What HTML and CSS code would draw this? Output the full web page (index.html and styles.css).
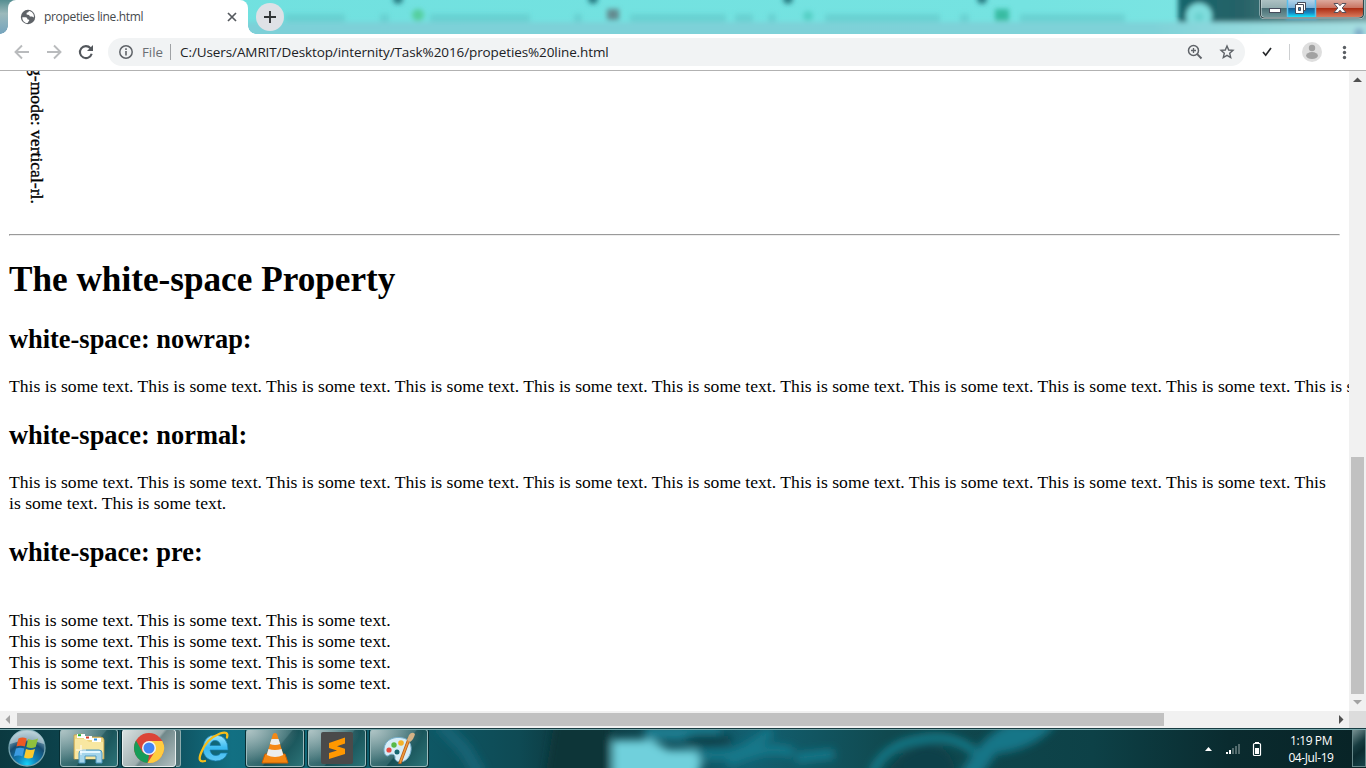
FILE: index.html
```
<!DOCTYPE html>
<html lang="en">
<head>
<meta charset="utf-8">
<title>propeties line.html</title>
<link rel="stylesheet" href="styles.css">
</head>
<body>
<div class="screen">
  <header class="titlebar">
    <svg class="backdrop" width="1366" height="34" viewBox="0 0 1366 34">
      <defs>
        <linearGradient id="aero" x1="0" x2="1"><stop offset="0" stop-color="#6f9fae"/><stop offset=".05" stop-color="#70e0df"/><stop offset=".75" stop-color="#75e3e1"/><stop offset="1" stop-color="#80e5e4"/></linearGradient>
        <linearGradient id="corner" x1="0" x2="1"><stop offset="0" stop-color="#15656c"/><stop offset=".3" stop-color="#266267"/><stop offset=".6" stop-color="#557f83"/><stop offset="1" stop-color="#7ba8ab"/></linearGradient>
        <linearGradient id="edge" x1="0" x2="1"><stop offset="0" stop-color="#7dd0d8"/><stop offset=".8" stop-color="#7ed2d8"/><stop offset=".92" stop-color="#9bdcdf"/><stop offset="1" stop-color="#a9e0e2"/></linearGradient>
        <linearGradient id="leftedge" x1="0" y1="0" x2="0" y2="1"><stop offset="0" stop-color="#558e91"/><stop offset=".4" stop-color="#9bb9bb"/><stop offset="1" stop-color="#75a4bd"/></linearGradient>
        <filter id="soft" filterUnits="userSpaceOnUse" x="-20" y="-20" width="1420" height="80"><feGaussianBlur stdDeviation="2.4"/></filter>
      </defs>
      <rect width="1366" height="34" fill="url(#aero)"/>
      <rect width="20" height="34" fill="url(#leftedge)"/>
      <g filter="url(#soft)">
        <rect x="1178" y="-16" width="210" height="40" fill="url(#corner)"/>
        <circle cx="1199" cy="16" r="13" fill="#7fdddd"/>
        <rect x="240" y="22" width="1140" height="28" fill="url(#edge)"/>
        <g fill="#58b5b8" opacity=".38"><rect x="285" y="14" width="60" height="8"/><rect x="380" y="14" width="9" height="8"/><rect x="430" y="14" width="100" height="8"/><rect x="574" y="14" width="8" height="8"/><rect x="630" y="14" width="96" height="8"/><rect x="735" y="14" width="18" height="8"/><rect x="768" y="14" width="8" height="8"/><rect x="825" y="14" width="115" height="8"/><rect x="960" y="14" width="9" height="8"/><rect x="1020" y="14" width="105" height="8"/></g>
        <g fill="#257980"><circle cx="398" cy="-1" r="5"/><circle cx="593" cy="-1" r="5"/><circle cx="788" cy="-1" r="5"/><circle cx="982" cy="-1" r="5"/></g>
        <circle cx="418" cy="15" r="6" fill="#55cf9e"/><rect x="607" y="9" width="12" height="11" fill="#648b90"/><circle cx="808" cy="16" r="5" fill="#54cfc5"/><rect x="995" y="9" width="14" height="12" fill="#38bba2"/><circle cx="1199" cy="17" r="4" fill="#68cfcd"/>
        <circle cx="1359" cy="33" r="5" fill="#7fabc8"/>
      </g>
    </svg>
    <div class="tab">
      <svg class="globe" width="16" height="16" viewBox="0 0 16 16"><circle cx="8" cy="8" r="7.2" fill="#5f6368"/><path d="M2.3 8.2h3.2c1.7.1 1.9 1.4 1.9 2l1.6.5c.7.4-.2 1.5-.8 2.2l-.6 1.2C4.500 14 2.200 11.500 2.300 8.200z M9 1.900l-.8 1.400-1.600.4v1.700l2.400.6 1 1.400h2l1.900 1c.4-3.500-1.800-6-4.900-6.500z" fill="#fff"/></svg>
      <span class="tab-title">propeties line.html</span>
      <svg class="tab-close" width="10" height="10" viewBox="0 0 10 10"><path d="M1 1l8 8M9 1L1 9" stroke="#55595e" stroke-width="1.7"/></svg>
    </div>
    <div class="foot left"></div><div class="foot right"></div>
    <div class="newtab"><svg width="14" height="14" viewBox="0 0 14 14"><path d="M7 1v12M1 7h12" stroke="#303336" stroke-width="1.9"/></svg></div>
    <svg class="controls" width="112" height="22" viewBox="0 0 112 22">
      <defs>
        <linearGradient id="g1" x1="0" x2="0" y1="0" y2="1"><stop offset="0" stop-color="#b1c4c5"/><stop offset=".46" stop-color="#92adaf"/><stop offset=".5" stop-color="#496e74"/><stop offset="1" stop-color="#759a9c"/></linearGradient>
        <linearGradient id="g2" x1="0" x2="0" y1="0" y2="1"><stop offset="0" stop-color="#b4d3e9"/><stop offset=".46" stop-color="#79b2da"/><stop offset=".5" stop-color="#176197"/><stop offset=".75" stop-color="#1388c4"/><stop offset="1" stop-color="#18e5fa"/></linearGradient>
        <linearGradient id="g3" x1="0" x2="0" y1="0" y2="1"><stop offset="0" stop-color="#dda99d"/><stop offset=".46" stop-color="#c97462"/><stop offset=".5" stop-color="#ad2e15"/><stop offset="1" stop-color="#d87a5c"/></linearGradient>
        <filter id="glow"><feGaussianBlur stdDeviation="1.7"/></filter>
      </defs>
      <rect x="27" y="-4" width="31" height="23" fill="#45c1fa" filter="url(#glow)"/>
      <path d="M1.500-1v15q0 4 4 4h94q5 0 5-4V-1z" fill="url(#g1)" stroke="#e1eeee" stroke-width="2"/>
      <path d="M29 0h27v17H29z" fill="url(#g2)"/>
      <path d="M57 0h47v14q0 3-4 3H57z" fill="url(#g3)"/>
      <path d="M1.500-1v15q0 4 4 4h94q5 0 5-4V-1" fill="none" stroke="#31474b" stroke-width="1.100"/>
      <path d="M28.500 0v17M56.500 0v17" stroke="#59bfee" stroke-width="1.500"/>
      <rect x="10.500" y="8.500" width="11" height="4" fill="#fff" stroke="#454b5b"/>
      <path d="M38.500 2.500h8v8h-8z" fill="#fff" stroke="#454b5b"/><path d="M36.500 4.500h8v9h-8z" fill="#fff" stroke="#454b5b"/><path d="M39.500 7.500h2v3h-2z" fill="#4183b1" stroke="#454b5b"/>
      <path d="M75 3.500h4l2 2.200 2-2.200h4L83.200 8l3.800 4.500h-4l-2-2.300-2 2.300h-4L78.800 8z" fill="#fff" stroke="#54505c"/>
    </svg>
  </header>

  <div class="toolbar">
    <svg class="nav" width="110" height="36" viewBox="0 0 110 36" fill="none" stroke="#b9bbbd" stroke-width="1.900">
      <path d="M29 18H16M22 11.500L15.500 18l6.500 6.500M47 18h13M54 11.500l6.500 6.500-6.500 6.500"/>
      <path d="M90.500 14.200a6 6 0 1 0 1.200 5.600" stroke="#53575c" stroke-width="2.100"/><path d="M93 11v6h-6z" fill="#53575c" stroke="none"/>
    </svg>
    <div class="omnibox">
      <svg class="info" width="16" height="16" viewBox="0 0 16 16"><circle cx="8" cy="8" r="6.200" fill="none" stroke="#5f6368" stroke-width="1.500"/><path d="M8 7v4.500M8 4.300v1.600" stroke="#5f6368" stroke-width="1.600"/></svg>
      <span class="scheme">File</span><span class="rule"></span>
      <span class="url">C:/Users/AMRIT/Desktop/internity/Task%2016/propeties%20line.html</span>
      <svg class="zoomicon" width="16" height="16" viewBox="0 0 16 16" fill="none" stroke="#5f6368"><circle cx="6.500" cy="6.500" r="5" stroke-width="1.500"/><path d="M10.200 10.200l4.300 4.300" stroke-width="1.900"/><path d="M6.500 4v5M4 6.500h5" stroke-width="1.300"/></svg>
      <svg class="star" width="16" height="16" viewBox="0 0 16 16"><path d="M8 2l1.700 4 4.300.4-3.300 2.900 1 4.300L8 11.300l-3.700 2.300 1-4.300L2 6.400 6.300 6z" fill="none" stroke="#5f6368" stroke-width="1.400"/></svg>
    </div>
    <svg class="tools" width="121" height="36" viewBox="0 0 121 36">
      <path d="M18 18l2.700 3.200L26 14" fill="none" stroke="#252729" stroke-width="1.700"/>
      <path d="M44.500 10v16" stroke="#cdcfd1"/>
      <circle cx="67" cy="18" r="10" fill="#dedede"/><circle cx="67" cy="14" r="3.200" fill="#a2a2a2"/><ellipse cx="67" cy="21.600" rx="6" ry="3.500" fill="#a2a2a2"/>
      <g fill="#5b5f64"><circle cx="99.500" cy="13.500" r="1.700"/><circle cx="99.500" cy="18.500" r="1.700"/><circle cx="99.500" cy="23.500" r="1.700"/></g>
    </svg>
  </div>

  <div class="viewport">
    <main class="page">
      <div class="vertical"><span>g-mode: vertical-rl.</span></div>
      <div class="divider"></div>
      <h1>The white-space Property</h1>
      <h2>white-space: nowrap:</h2>
      <p class="nowrap">This is some text. This is some text. This is some text. This is some text. This is some text. This is some text. This is some text. This is some text. This is some text. This is some text. This is some text. This is some text.</p>
      <h2>white-space: normal:</h2>
      <p>This is some text. This is some text. This is some text. This is some text. This is some text. This is some text. This is some text. This is some text. This is some text. This is some text. This is some text. This is some text.</p>
      <h2>white-space: pre:</h2>
      <p class="pre">
This is some text. This is some text. This is some text.
This is some text. This is some text. This is some text.
This is some text. This is some text. This is some text.
This is some text. This is some text. This is some text.</p>
    </main>
    <div class="vbar">
      <svg width="17" height="17"><path d="M4 11h9L8.500 6.500z" fill="#505050"/></svg>
      <div class="vthumb"></div>
      <svg width="17" height="17"><path d="M4 6h9l-4.500 4.500z" fill="#a3a3a3"/></svg>
    </div>
    <div class="hbar">
      <svg width="17" height="17"><path d="M10 4v9L5.500 8.500z" fill="#a3a3a3"/></svg>
      <div class="hthumb"></div>
      <svg width="17" height="17"><path d="M7 4v9l4.500-4.500z" fill="#505050"/></svg>
    </div>
    <div class="grip"></div>
  </div>

  <footer class="taskbar">
    <svg class="backdrop" width="1366" height="40" viewBox="0 0 1366 40">
      <defs>
        <linearGradient id="wall" x1="0" x2="1"><stop offset="0" stop-color="#0b3940"/><stop offset=".13" stop-color="#0f5462"/><stop offset=".17" stop-color="#127083"/><stop offset=".32" stop-color="#0e5663"/><stop offset=".38" stop-color="#0e4a54"/><stop offset=".42" stop-color="#0c373c"/><stop offset=".55" stop-color="#126071"/><stop offset=".65" stop-color="#10494f"/><stop offset=".8" stop-color="#0d4147"/><stop offset=".9" stop-color="#0a2b2f"/><stop offset="1" stop-color="#082326"/></linearGradient>
        <filter id="haze" filterUnits="userSpaceOnUse" x="380" y="-40" width="800" height="130"><feGaussianBlur stdDeviation="4.500"/></filter>
      </defs>
      <rect width="1366" height="40" fill="url(#wall)"/>
      <g filter="url(#haze)">
        <path d="M555-10h55v60h-65z" fill="#0c3539"/>
        <path d="M440-4l25 26 15 25" fill="none" stroke="#136474" stroke-width="14"/>
        <path d="M645-2h75v14h-75z" fill="#1a7e91"/>
        <ellipse cx="708" cy="12" rx="25" ry="6" fill="#0b4148"/>
        <path d="M612 12h40l16 10h38l-10 30h-84z" fill="#70d0dc"/>
        <path d="M698 27h28q20-2 45-24M728 35q40-20 65-10M796 30l38-4" fill="none" stroke="#15788a" stroke-width="10"/>
        <path d="M872 46q12-30 50-35 30-5 52 12" fill="none" stroke="#168394" stroke-width="7"/>
        <path d="M885 46q20-27 43-29 30 4 26 33z" fill="#0d4148"/>
        <path d="M958 50q20-40 50-54h48q-20 25-60 30l-18 26z" fill="#157688"/>
      </g>
    </svg>
    <svg class="start" width="60" height="40" viewBox="0 0 60 40">
      <defs><radialGradient id="orb" cx=".5" cy=".95" r=".9"><stop offset="0" stop-color="#16d4fa"/><stop offset=".3" stop-color="#117fb7"/><stop offset=".65" stop-color="#164c70"/><stop offset="1" stop-color="#a7c5d0"/></radialGradient></defs>
      <circle cx="27" cy="20" r="18" fill="url(#orb)" stroke="#75a5b1" stroke-width="1.300"/><path d="M10 16a17 14 0 0 1 34 0q-17-7-34 0z" fill="#c7d9df" opacity=".6"/>
      <path d="M18.500 10.500q4-2 8.200 0l-1.800 8q-4.500-1.600-8.500 0z" fill="#ed5a25"/><path d="M28 11q5 2 10-.5l-2.300 8.500q-4.500 2-9.300 0z" fill="#8fc13d"/><path d="M16 20.500q4-1.600 8.300 0l-1.900 8q-4-1.800-8.500 0z" fill="#3c9be1"/><path d="M26 21q4.500 2 9 0l-2.200 8.500q-4.500 2-8.800 0z" fill="#fac92d"/>
    </svg>
    <div class="task explorer"><svg width="34" height="32" viewBox="0 0 34 32">
      <path d="M2 3l9-1 2 3h15q4 0 4 3v19H2z" fill="#efd681" stroke="#bc9d4e" stroke-width=".8"/><path d="M5 2h8v4H5zM12 4h8v4h-8zM20 6h9v4h-9z" fill="#fff"/><path d="M6 2.200h3v2H6z" fill="#22b035"/><path d="M14 4.500h3v2h-3z" fill="#db3c27"/><path d="M22 6.500h3v2h-3z" fill="#2d8edc"/><path d="M3 7h10l4 3h14v17H3z" fill="#f8e7a1"/><path d="M7 31V21q0-3 4-3h16q3 0 3 3v10h-6v-7H13v7z" fill="#a4d5eb" stroke="#4e99c0"/><path d="M8 20h20" stroke="#e2f7ff" stroke-width="2"/><path d="M9 13v10M4 18h10" stroke="#fff" stroke-width="1.200" opacity=".8"/></svg></div>
    <div class="task chrome"><svg width="32" height="32" viewBox="0 0 32 32"><circle cx="16" cy="16" r="15" fill="#db4437"/><path d="M3 8.500L9.500 20l6.500 3.500L14.500 31A15 15 0 0 1 3 8.500z" fill="#169c58"/><path d="M16 9h13.300A15 15 0 0 1 14.500 31l7.500-11.500z" fill="#ffcd40"/><circle cx="16" cy="16" r="7" fill="#f4f5f5"/><circle cx="16" cy="16" r="5.500" fill="#4285f4"/></svg></div>
    <div class="stack"></div>
    <div class="ie"><svg width="36" height="36" viewBox="0 0 36 36"><defs><linearGradient id="ie" x2="0" y2="1"><stop stop-color="#a1e9ff"/><stop offset=".5" stop-color="#39baf0"/><stop offset="1" stop-color="#5fc8f5"/></linearGradient></defs><path d="M32 21H14q1 5.500 6 5.500 3.500 0 4.500-2.500h7q-3 8-12 8Q7 31 7 19 8 6 20 6q12 1 12 15zM14 16.500h10.500q-1-5-5.500-5-4 0-5 5z" fill="url(#ie)" stroke="#187cac" stroke-width=".7" fill-rule="evenodd"/><path d="M9 32q-8 2-4-8Q10 10 24 4.500q9-3 7 4" fill="none" stroke="#f6bd18" stroke-width="2.300" stroke-linecap="round"/></svg></div>
    <div class="task vlc"><svg width="30" height="32" viewBox="0 0 30 32"><path d="M5 22L2 31h26l-3-9z" fill="#f38712" stroke="#cb5e00"/><path d="M13 2q2-2 4 0l7 23q-9 5-18 0z" fill="#f58815"/><path d="M11.500 7h7l1.700 5q-5.200 2-10.300 0zM8.500 17q6.500 2 13 0l1.800 6q-8.300 4-16.600 0z" fill="#eceeee"/></svg></div>
    <div class="task sublime"><svg width="32" height="32" viewBox="0 0 32 32"><rect width="32" height="32" rx="2" fill="#4a4a4a"/><path d="M8 11l16-5.500v6l-8 2.700 8 2.500V22L8 27v-6l8-2.500-8-2.500z" fill="#ff9800"/></svg></div>
    <div class="task paint"><svg width="34" height="32" viewBox="0 0 34 32"><path d="M2 17C3 7 13 4 21 6c10 2 10 15 4 21-5 5-13 3-12-2 0-3-4-4-7-1-3 0-4-3-4-7z" fill="#d7edf7" stroke="#78b0cd"/><circle cx="7" cy="18" r="2.600" fill="#e64b42"/><circle cx="12" cy="13" r="2.700" fill="#58b947"/><circle cx="19" cy="11" r="2.800" fill="#f4b229"/><circle cx="15" cy="20" r="2.500" fill="#17666f"/><path d="M27 7L18 31" stroke="#b85e1b" stroke-width="3.200" stroke-linecap="round"/><path d="M27 7L18 31" stroke="#ef9a3c" stroke-width="1.500"/><path d="M25 8l2-5q3-4 6-1-1 5-5 8z" fill="#d5b286"/></svg></div>
    <div class="tray">
      <svg width="70" height="40" viewBox="0 0 70 40"><path d="M5 23h7l-3.500-4z" fill="#fff"/><g fill="#fff"><path d="M26 24h2v2h-2zM29 22h2v4h-2z"/></g><g fill="#536b6d"><path d="M32 20h2v6h-2zM35 18h2v8h-2zM38 16h2v10h-2z"/></g><path d="M55 14h4v2h-4z" fill="#fff"/><rect x="53.500" y="15.500" width="7" height="12" rx="1" fill="none" stroke="#fff" stroke-width="1.200"/><path d="M55 20h4v6h-4z" fill="#fff"/></svg>
      <div class="clock"><span>1:19 PM</span><span class="date">04-Jul-19</span></div>
    </div>
    <div class="showdesktop"></div>
  </footer>
</div>
</body>
</html>
```
FILE: styles.css
```
* { box-sizing: border-box; }
body { margin: 0; }
svg { display: block; flex: none; }
.screen { width: 1366px; height: 768px; overflow: hidden; display: flex; flex-direction: column; background: #fff; font-family: "Open Sans", "Noto Sans", sans-serif; }

.titlebar { position: relative; height: 34px; flex: none; display: flex; overflow: hidden; }
.backdrop { position: absolute; left: 0; top: 0; }
.tab { position: relative; width: 240px; height: 34px; margin-left: 8px; padding: 0 11px 0 12px; display: flex; align-items: center; background: #fff; border-radius: 8px 8px 0 0; }
.tab-title { margin-left: 8px; padding-bottom: 1px; flex: 1; font-size: 12px; letter-spacing: -.33px; color: #45494d; white-space: nowrap; }
.foot { position: absolute; bottom: 0; width: 8px; height: 8px; }
.foot.left { left: 0; background: radial-gradient(circle at 0 0, transparent 7.500px, #fff 8px); }
.foot.right { left: 248px; background: radial-gradient(circle at 8px 0, transparent 7.500px, #fff 8px); }
.newtab { position: relative; width: 28px; height: 28px; margin: 3px 0 0 8px; border-radius: 50%; background: #dee1e6; display: flex; align-items: center; justify-content: center; }
.controls { position: relative; margin-left: auto; margin-right: -5px; }

.toolbar { height: 37px; flex: none; display: flex; background: #fff; border-bottom: 1px solid #b2b2b2; }
.nav { margin-right: -2px; }
.omnibox { width: 1137px; height: 28px; margin-top: 4px; padding: 0 10px; display: flex; align-items: center; border-radius: 14px; background: #f1f3f4; }
.scheme { margin-left: 8px; font-size: 13.300px; color: #6a6e73; }
.rule { width: 1px; height: 16px; margin: 0 9px 0 7px; background: #9fa2a5; }
.url { font-size: 13.500px; letter-spacing: -.1px; color: #202124; white-space: nowrap; }
.zoomicon { margin-left: auto; }
.star { margin-left: 16px; }

.viewport { height: 657px; flex: none; display: grid; grid-template: 640px 17px / 1349px 17px; }
.page { overflow: hidden; padding: 0 9px; font-family: "Liberation Serif", "Times New Roman", serif; font-size: 17.600px; line-height: 21px; color: #000; }
.vertical { height: 163px; padding: 0 0 30px 17px; display: flex; align-items: flex-end; overflow: hidden; }
.vertical span { writing-mode: vertical-rl; white-space: nowrap; -webkit-text-stroke: .35px #000; }
.divider { height: 2px; border: 1px solid #9a9a9a; border-color: #9a9a9a #eee #eee #9a9a9a; }
.page h1 { margin: 24px 0; font-size: 35.200px; line-height: 40px; }
.page h2 { margin: 23px 0 22px; font-size: 26.400px; line-height: 30px; }
.page h1 + h2 { margin-top: 24px; }
.page p { margin: 0; padding-right: 4px; letter-spacing: .018px; }
.page .nowrap { white-space: nowrap; }
.page .pre { white-space: pre; }
.vbar { background: #f1f1f1; display: flex; flex-direction: column; }
.vthumb { width: 13px; height: 237px; margin: auto 2px 0; background: #c1c1c1; }
.hbar { background: #f1f1f1; display: flex; }
.hthumb { width: 1147px; height: 13px; margin: 2px auto 0 0; background: #c1c1c1; }
.grip { background: #dcdcdc; }

.taskbar { position: relative; height: 40px; flex: none; display: flex; overflow: hidden; }
.taskbar::before { content: ""; position: absolute; z-index: 1; left: 0; right: 0; top: 0; height: 2px; background: linear-gradient(#173c42 50%, #79a9ad 50%); }
.start, .task, .ie, .stack, .tray, .showdesktop { position: relative; flex: none; }
.task { width: 58px; height: 38px; margin: 1px 4px 0 0; display: flex; align-items: center; justify-content: center; border: 1px solid #9bbabc; border-radius: 3px; box-shadow: 0 0 0 1px #082f34; background: radial-gradient(ellipse at 0 0, #b0c5c6, transparent 65%), linear-gradient(130deg, #527f83, #2f666b 52%, #164e54 54%, #2c7478); }
.chrome { width: 54px; margin-right: 0; border-color: #e7efef; background: linear-gradient(130deg, #dae2e2, #9fafb0 50%, #71898b 54%, #b2c0c1); }
.stack { width: 5px; height: 38px; margin-top: 1px; border: 1px solid #8cabad; border-left: 0; border-radius: 0 3px 3px 0; background: #507175; }
.ie { width: 65px; padding: 1px 0 0 15px; }
.tray { margin-left: auto; display: flex; }
.clock { width: 82px; padding: 4px 0 0; display: flex; flex-direction: column; align-items: center; color: #fff; font-size: 12px; line-height: 17px; letter-spacing: -.4px; }
.showdesktop { width: 14px; height: 38px; margin-top: 1px; border: 1px solid #66888a; background: linear-gradient(140deg, #779192, #173c40 40%, #0b2c30 60%, #174349); }
```
